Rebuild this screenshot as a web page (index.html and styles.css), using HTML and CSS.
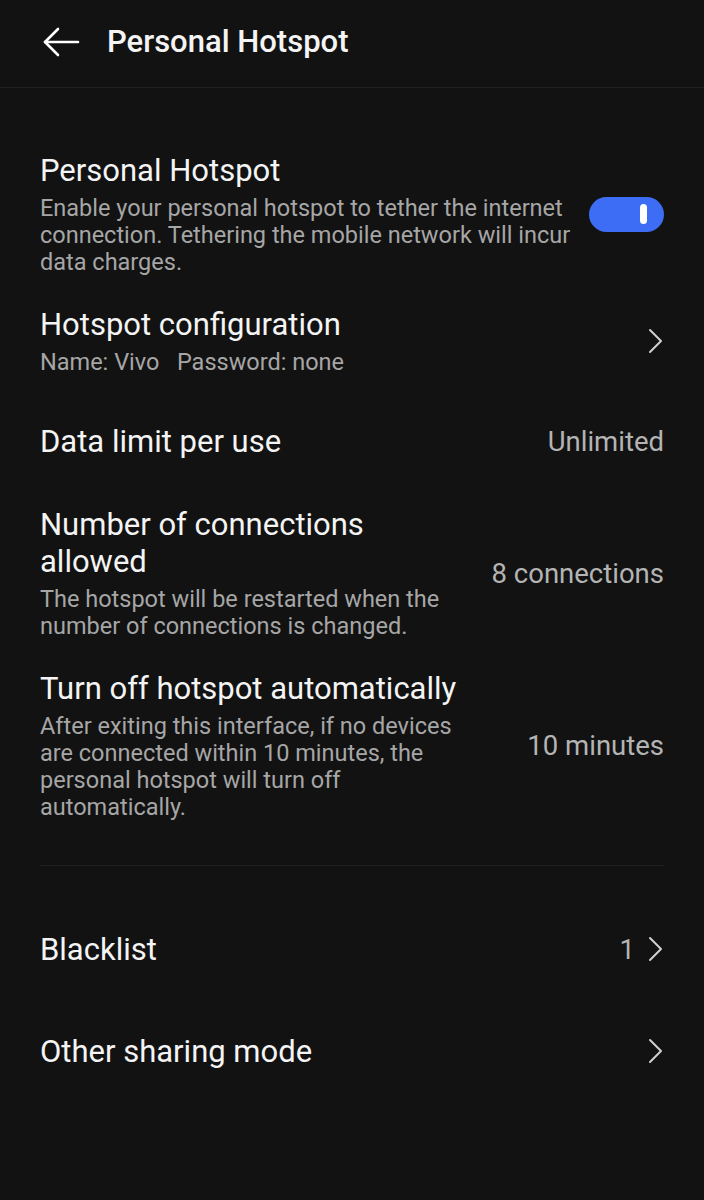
FILE: index.html
```html
<!DOCTYPE html>
<html lang="en">
<head>
  <meta charset="UTF-8">
  <meta name="viewport" content="width=device-width, initial-scale=1.0">
  <title>Personal Hotspot</title>
  <link rel="stylesheet" href="styles.css">
</head>
<body>
  <div id="app">
    <header class="top-bar">
      <button class="back-btn" aria-label="Back">
        <svg width="38" height="32" viewBox="0 0 38 32" fill="none" stroke="#fff" stroke-width="2.6" stroke-linecap="round" stroke-linejoin="round">
          <path d="M36 16H3"/>
          <path d="M16 3L3 16l13 13"/>
        </svg>
      </button>
      <h1>Personal Hotspot</h1>
    </header>

    <main class="settings">
      <div class="row">
        <div class="row-text">
          <div class="row-title">Personal Hotspot</div>
          <div class="row-sub">Enable your personal hotspot to tether the internet connection. Tethering the mobile network will incur data charges.</div>
        </div>
        <div class="toggle on"><span class="knob"></span></div>
      </div>

      <div class="row">
        <div class="row-text">
          <div class="row-title">Hotspot configuration</div>
          <div class="row-sub">Name: Vivo&nbsp;&nbsp;&nbsp;Password: none</div>
        </div>
        <svg class="chevron" width="16" height="26" viewBox="0 0 16 26" fill="none" stroke="#d0d0d0" stroke-width="2" stroke-linecap="round" stroke-linejoin="round"><path d="M3 2l11 11L3 24"/></svg>
      </div>

      <div class="row">
        <div class="row-text">
          <div class="row-title">Data limit per use</div>
        </div>
        <div class="row-value">Unlimited</div>
      </div>

      <div class="row">
        <div class="row-text narrow">
          <div class="row-title">Number of connections allowed</div>
          <div class="row-sub">The hotspot will be restarted when the number of connections is changed.</div>
        </div>
        <div class="row-value">8 connections</div>
      </div>

      <div class="row">
        <div class="row-text narrow">
          <div class="row-title">Turn off hotspot automatically</div>
          <div class="row-sub">After exiting this interface, if no devices are connected within 10 minutes, the personal hotspot will turn off automatically.</div>
        </div>
        <div class="row-value">10 minutes</div>
      </div>

      <div class="divider"></div>

      <div class="row tall">
        <div class="row-text">
          <div class="row-title">Blacklist</div>
        </div>
        <div class="row-value">1</div>
        <svg class="chevron" width="16" height="26" viewBox="0 0 16 26" fill="none" stroke="#d0d0d0" stroke-width="2" stroke-linecap="round" stroke-linejoin="round"><path d="M3 2l11 11L3 24"/></svg>
      </div>

      <div class="row tall">
        <div class="row-text">
          <div class="row-title">Other sharing mode</div>
        </div>
        <svg class="chevron" width="16" height="26" viewBox="0 0 16 26" fill="none" stroke="#d0d0d0" stroke-width="2" stroke-linecap="round" stroke-linejoin="round"><path d="M3 2l11 11L3 24"/></svg>
      </div>
    </main>
  </div>
</body>
</html>
```

FILE: styles.css
```css
:root {
  --bg: #121212;
  --text: #f4f4f4;
  --muted: #a6a6a6;
  --value: #b4b4b4;
  --line: #1f1f1f;
  --accent: #3d6df4;
}

* {
  box-sizing: border-box;
  margin: 0;
  padding: 0;
}

html, body {
  background: var(--bg);
}

body {
  font-family: Roboto, "Noto Sans", Arial, sans-serif;
  color: var(--text);
  width: 704px;
  min-height: 1200px;
}

.top-bar {
  height: 88px;
  display: flex;
  align-items: center;
  padding-left: 42px;
  border-bottom: 1px solid var(--line);
}

.back-btn {
  background: none;
  border: none;
  display: flex;
  align-items: center;
  margin-right: 27px;
  margin-top: -4px;
}

.top-bar h1 {
  font-size: 31px;
  font-weight: 500;
  margin-top: -4px;
}

.settings {
  padding: 49px 40px 0;
}

.row {
  display: flex;
  align-items: center;
  min-height: 100px;
  padding: 15px 0;
  gap: 12px;
}

.row.tall {
  min-height: 102px;
}

.row-text {
  flex: 1;
  min-width: 0;
}

.row-text.narrow {
  flex: 0 1 430px;
}

.row-title {
  font-size: 31px;
  line-height: 37px;
}

.row-sub {
  font-size: 23.5px;
  line-height: 27px;
  color: var(--muted);
  margin-top: 6px;
}

.row-value {
  margin-left: auto;
  font-size: 27.5px;
  color: var(--value);
  white-space: nowrap;
}

.chevron {
  flex-shrink: 0;
  margin-right: 1px;
}

.toggle {
  width: 75px;
  height: 35px;
  border-radius: 18px;
  background: #555;
  flex-shrink: 0;
  display: flex;
  align-items: center;
  justify-content: flex-end;
  padding-right: 17px;
}

.toggle.on {
  background: var(--accent);
}

.knob {
  width: 7px;
  height: 20px;
  border-radius: 4px;
  background: #fff;
}

.divider {
  height: 1px;
  background: var(--line);
  margin: 29px 0 32px;
}
```
